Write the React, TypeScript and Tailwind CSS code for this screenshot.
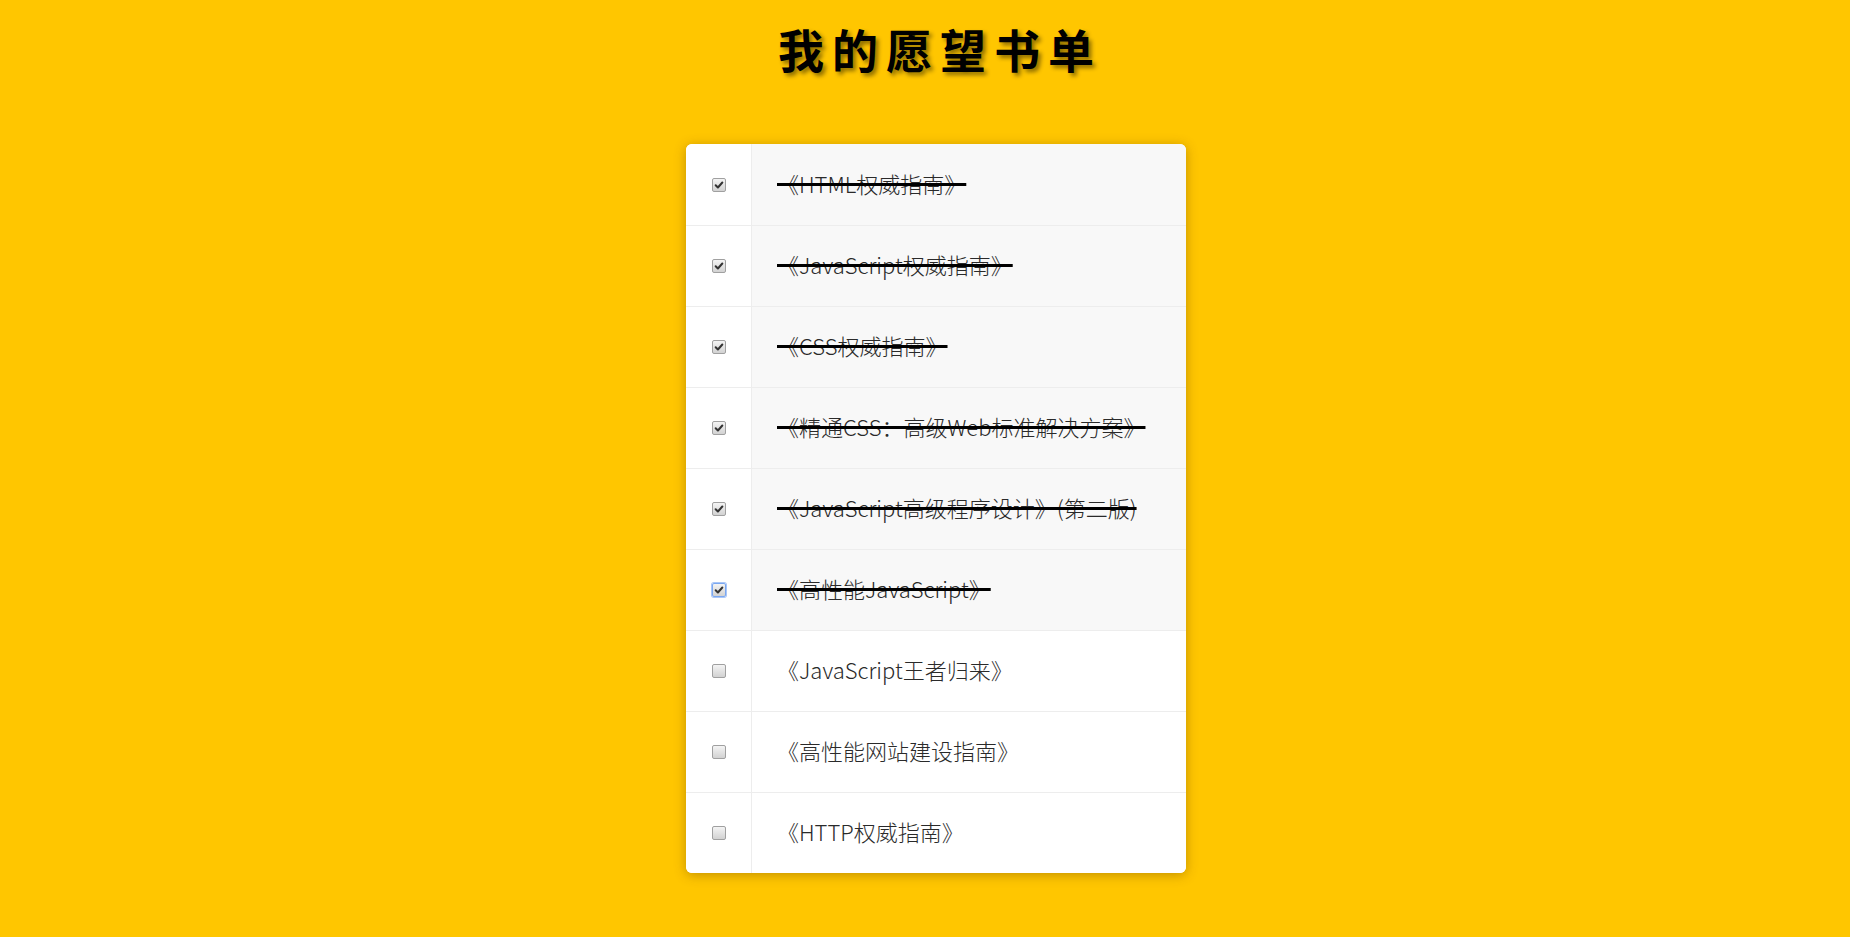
const books = [
  { title: "《HTML权威指南》", done: true },
  { title: "《JavaScript权威指南》", done: true },
  { title: "《CSS权威指南》", done: true },
  { title: "《精通CSS：高级Web标准解决方案》", done: true },
  { title: "《JavaScript高级程序设计》(第二版)", done: true },
  { title: "《高性能JavaScript》", done: true, focus: true },
  { title: "《JavaScript王者归来》", done: false },
  { title: "《高性能网站建设指南》", done: false },
  { title: "《HTTP权威指南》", done: false },
];

function Check({ checked, focus }: { checked: boolean; focus?: boolean }) {
  return (
    <span
      className={`relative flex h-[14px] w-[14px] items-center justify-center rounded-[2px] border bg-gradient-to-b from-[#f4f4f4] to-[#d2d2d2] ${
        focus ? "border-[#7aa7f0] shadow-[0_0_0_1px_#a9c6f7]" : "border-[#a0a0a0]"
      }`}
    >
      {checked && (
        <svg viewBox="0 0 12 12" className="h-[10px] w-[10px]">
          <path d="M2 6.3 L4.7 9 L10 3" fill="none" stroke="#333" strokeWidth="2.4" strokeLinecap="round" strokeLinejoin="round" />
        </svg>
      )}
    </span>
  );
}

export default function App() {
  return (
    <div className="min-h-screen bg-[#ffc600] pl-[22px]" style={{ fontFamily: "'Noto Sans CJK SC', sans-serif" }}>
      <h1 className="pt-[18px] pl-[8px] text-center text-[46px] font-bold leading-[60px] tracking-[8px] text-black [text-shadow:3px_3px_4px_rgba(0,0,0,0.45)]">
        我的愿望书单
      </h1>
      <ul className="mx-auto mt-[66px] w-[500px] overflow-hidden rounded-[6px] bg-white shadow-[0_2px_12px_rgba(120,80,0,0.45)]">
        {books.map((b, i) => (
          <li key={i} className={`flex h-[81px] ${i > 0 ? "border-t border-[#ededed]" : ""}`}>
            <div className="flex w-[66px] shrink-0 items-center justify-center border-r border-[#ededed] bg-white">
              <Check checked={b.done} focus={b.focus} />
            </div>
            <div className={`flex flex-1 items-center pb-[3px] pl-[25px] ${b.done ? "bg-[#f8f8f8]" : "bg-white"}`}>
              <span
                className={`text-[22px] font-light text-[#2a2a2a] ${
                  b.done ? "line-through decoration-black decoration-[3px]" : ""
                }`}
              >
                {b.title}
              </span>
            </div>
          </li>
        ))}
      </ul>
    </div>
  );
}
